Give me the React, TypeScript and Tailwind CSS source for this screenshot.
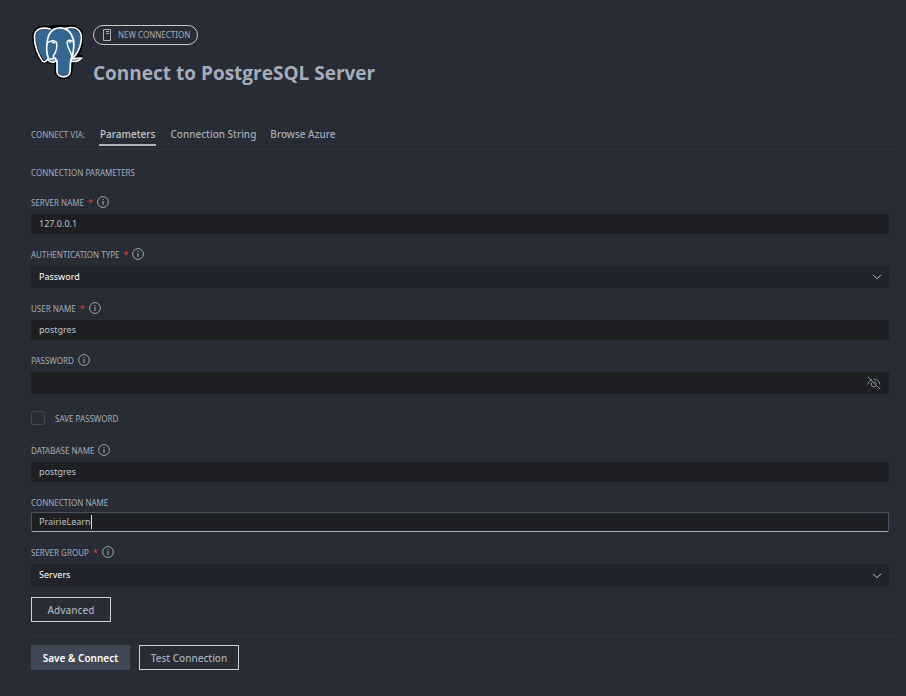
import React from "react";

function Elephant() {
  return (
    <svg viewBox="0 0 52 54" className="mt-px h-[54px] w-[52px] shrink-0" aria-hidden="true">
      <g strokeLinejoin="round" strokeLinecap="round" transform="translate(1 0)">
        <path
          d="M17 3C9 1 2 4 2 12c0 9 4 19 8 23.500 2.500 2.500 4.500 1 6-1-1 2.500 5 3 8.500 1.500V47c.5 7 13 7.500 14 0 .5-4 .5-8 1.500-10.500 5 0 9-1.500 10.500-4.500-1-1-5 .5-6-.5C48 25 52 14 49.500 8 46 1.500 38 1 33 2.500 27 1 21 1 17 3Z"
          fill="#336791" stroke="#000" strokeWidth="3.600"
        />
        <path
          d="M18 4C10 1.500 2.500 4 2.500 12c0 9 4 19 8 24 2 2 4 0 6-3M33 3.500C40 1.500 46 3 48.500 8c2.500 6-1 18-6.500 24"
          fill="none" stroke="#fff" strokeWidth="1.700"
        />
        <path
          d="M16 32c-1.500-4-1.500-9-1-13C15.500 10 19 4 26.500 3c9-1 13 5 15 12 1 6 0 11-1 16-1.500 2-2 4-2 7l-.5 9c-.5 6.500-12.500 6.500-13 0V36c-2-1.500-3.500-2-4.500-2.500"
          fill="#336791" stroke="#fff" strokeWidth="1.700"
        />
        <path d="M16 17.500c3-2.500 7-2.500 8.500 0 1 5 0 9-3 13-.5 2 0 3 2 4M41 16.500c-3-2-5-1.500-6 .5 0 6 4 9 5 15" fill="none" stroke="#fff" strokeWidth="1.500" />
        <path d="M15.500 34.500c3 0 5-1 8-1.500 1 2 1 3-1 4-3 .8-5 .3-7-2.500ZM39.500 33.500c4 .5 7-1 10.500-.5-2.500 3-6.500 4-10.500 3.500Z" fill="#7d9cb8" stroke="#fff" strokeWidth="1.300" />
        <path d="M20.500 17.500h2M37.500 17h1" stroke="#fff" strokeWidth="1.700" />
      </g>
    </svg>
  );
}

function ServerIcon() {
  return (
    <svg viewBox="0 0 10 14" className="h-3.5 w-2.5" fill="none" stroke="#abb2bf" aria-hidden="true">
      <path d="M1.500 1.500h7v11h-7ZM4 3.500h3M4 5.500h3" />
    </svg>
  );
}

function InfoIcon() {
  return (
    <svg viewBox="0 0 12 12" className="h-3 w-3" fill="none" stroke="#a7afbd" aria-hidden="true">
      <circle cx="6" cy="6" r="5.400" strokeWidth="0.900" />
      <path d="M6 5v4M6 3v1.100" />
    </svg>
  );
}

function EyeOffIcon() {
  return (
    <svg viewBox="0 0 14 14" className="h-3.5 w-3.5" fill="none" stroke="#9098a6" aria-hidden="true">
      <path d="M.8.8l12.400 12.400M1 8.300C1.700 5.800 3.300 4.300 5 3.600M6.500 3.200C9.800 3 12.300 5.100 13 8.300" />
      <path d="M8.900 9.700A2.500 2.500 0 1 1 5.500 6.200M7.500 5.700a2.400 2.400 0 0 1 2 2" />
    </svg>
  );
}

type FieldProps = {
  id: string;
  label: string;
  required?: boolean;
  info?: boolean;
  children: React.ReactNode;
};

function Field({ id, label, required, info = true, children }: FieldProps) {
  return (
    <div>
      <div className={info ? "mb-1 flex h-4 items-center" : "mb-0.5 flex h-4 items-center"}>
        <label htmlFor={id} className="flex h-4 items-center pt-px text-[8px] leading-4 uppercase">
          {label}
          {required && <span className="ml-1 text-[9px] leading-4 text-[#e03c3c]">*</span>}
        </label>
        {info && (
          <button type="button" aria-label={`About ${label}`} className="ml-1">
            <InfoIcon />
          </button>
        )}
      </div>
      {children}
    </div>
  );
}

const inputClass =
  "block h-5 w-full rounded-xs bg-[#1e1f22] px-2 pb-px text-[9px] text-[#bcc2cd] outline-none";

function Dropdown({ id, value, className }: { id: string; value: string; className: string }) {
  return (
    <div className="relative">
      <select
        id={id}
        defaultValue={value}
        className={`block w-full appearance-none rounded-xs bg-[#21252b] px-2 pb-px text-[9px] text-white outline-none ${className}`}
      >
        <option>{value}</option>
      </select>
      <svg
        viewBox="0 0 10 6"
        className="pointer-events-none absolute top-1/2 right-[7px] h-1.5 w-2.5 -translate-y-1/2"
        fill="none"
        stroke="#c5c5c5"
        aria-hidden="true"
      >
        <path d="M1 .8l4 4 4-4" />
      </svg>
    </div>
  );
}

export default function App() {
  return (
    <main className="min-h-screen bg-[#282c34] pt-6 pr-1 pl-[31px] font-['Noto_Sans','Open_Sans',sans-serif] text-[#a4acba]">
      <header className="flex gap-2.5">
        <Elephant />
        <div>
          <div className="mt-px flex h-5 w-[105px] items-center gap-1.5 rounded-full border border-[#c5c8ce] pl-2 text-[8px]">
            <ServerIcon />
            NEW CONNECTION
          </div>
          <h1 className="mt-4 font-['Open_Sans','Noto_Sans',sans-serif] text-[19px] leading-6 font-bold">Connect to PostgreSQL Server</h1>
        </div>
      </header>

      <nav className="mt-[35px] flex h-[30px] items-center border-b border-[#2f343d] text-[10px] font-medium">
        <span className="w-[68px] text-[8px] font-normal">CONNECT VIA:</span>
        <div className="flex h-full items-start gap-3.5">
          <button type="button" className="h-[26px] border-b-2 border-[#abb2bf] px-px pt-1 text-[#c3c9d3]">Parameters</button>
          <button type="button" className="h-[26px] pt-0.5">Connection String</button>
          <button type="button" className="h-[26px] pt-0.5">Browse Azure</button>
        </div>
      </nav>

      <form className="flex flex-col" onSubmit={(e) => e.preventDefault()}>
        <h2 className="mt-[15px] mr-3.5 text-[8px] leading-4">CONNECTION PARAMETERS</h2>
        <div className="mt-[13px] mr-[13px] flex flex-col gap-3">
          <Field id="server" label="Server name" required>
            <input id="server" defaultValue="127.0.0.1" className={inputClass} />
          </Field>
          <Field id="auth" label="Authentication type" required>
            <Dropdown id="auth" value="Password" className="h-[22px]" />
          </Field>
          <Field id="user" label="User name" required>
            <input id="user" defaultValue="postgres" className={inputClass} />
          </Field>
          <Field id="password" label="Password">
            <div className="flex h-[22px] items-center rounded-xs bg-[#1e1f22] pr-2">
              <input id="password" type="password" className="h-full min-w-0 flex-1 bg-transparent px-2 text-[9px] outline-none" />
              <button type="button" aria-label="Show password">
                <EyeOffIcon />
              </button>
            </div>
          </Field>
          <label className="flex h-6 items-center gap-2.5 text-[8px]">
            <input type="checkbox" className="h-3.5 w-3.5 appearance-none rounded-xs border border-[#404754]" />
            <span className="pt-px">SAVE PASSWORD</span>
          </label>
          <Field id="database" label="Database name">
            <input id="database" defaultValue="postgres" className={inputClass} />
          </Field>
          <Field id="connection" label="Connection name" info={false}>
            <div className="flex h-5 items-center rounded-xs border border-[#4a5160] border-b-[#abb2bf] bg-[#1e1f22] px-[7px]">
              <input
                id="connection"
                defaultValue="PrairieLearn"
                className="field-sizing-content border-r border-[#d7dae0] bg-transparent text-[9px] text-[#bcc2cd] outline-none"
              />
            </div>
          </Field>
          <Field id="group" label="Server group" required>
            <Dropdown id="group" value="Servers" className="h-[23px]" />
          </Field>
        </div>

        <div className="flex flex-col text-[10px] font-medium">
          <button type="button" className="mt-2.5 h-[25px] w-20 border border-[#d0d2d6] pt-0.5">
            Advanced
          </button>
          <div className="mt-3.5 flex gap-[9px] border-t border-[#2f343d] pt-2">
            <button type="submit" className="h-[25px] w-[99px] bg-[#404754] pt-0.5 font-semibold text-white">
              Save &amp; Connect
            </button>
            <button type="button" className="h-[25px] w-[100px] border border-[#d0d2d6] pt-0.5">
              Test Connection
            </button>
          </div>
        </div>
      </form>
    </main>
  );
}
